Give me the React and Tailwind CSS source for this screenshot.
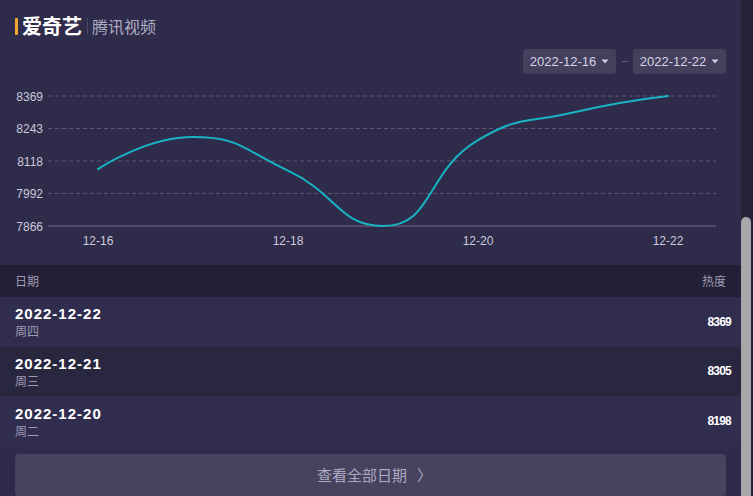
import React from "react";

const cjk = { fontFamily: '"Noto Sans CJK SC", "Liberation Sans", sans-serif' };
const num = { fontFamily: '"Liberation Sans", "Noto Sans CJK SC", sans-serif' };

const points = [
    { label: "12-16", value: 8086 },
    { label: "12-17", value: 8210 },
    { label: "12-18", value: 8080 },
    { label: "12-19", value: 7866 },
    { label: "12-20", value: 8198 },
    { label: "12-21", value: 8305 },
    { label: "12-22", value: 8369 },
];

const rows = [
    { date: "2022-12-22", week: "周四", heat: 8369 },
    { date: "2022-12-21", week: "周三", heat: 8305 },
    { date: "2022-12-20", week: "周二", heat: 8198 },
];

// chart coords are relative to the svg top (page y 74)
const TOP = 22;
const BOTTOM = 152;
const MAX = 8369;
const MIN = 7866;
const toY = (v) => TOP + ((MAX - v) * (BOTTOM - TOP)) / (MAX - MIN);

const clamp = (v, a, b) => Math.max(Math.min(v, Math.max(a, b)), Math.min(a, b));

// same smoothing as an echarts line with smooth: true
function buildPath() {
    const pts = points.map((p, i) => [98 + i * 95, toY(p.value)]);
    const smooth = 0.5;
    const n = pts.length;
    let d = `M${pts[0][0]},${pts[0][1].toFixed(1)}`;
    let cpx0 = pts[0][0];
    let cpy0 = pts[0][1];
    for (let k = 1; k < n; k++) {
        const [x, y] = pts[k];
        let cpx1 = x;
        let cpy1 = y;
        let nx = x;
        let ny = y;
        if (k < n - 1) {
            const [px, py] = pts[k - 1];
            const [qx, qy] = pts[k + 1];
            let vx = qx - px;
            let vy = qy - py;
            const lenPrev = Math.hypot(x - px, y - py);
            const lenNext = Math.hypot(qx - x, qy - y);
            const ratio = lenNext / (lenNext + lenPrev);
            nx = clamp(x + vx * smooth * ratio, qx, x);
            ny = clamp(y + vy * smooth * ratio, qy, y);
            vx = nx - x;
            vy = ny - y;
            cpx1 = clamp(x - (vx * lenPrev) / lenNext, px, x);
            cpy1 = clamp(y - (vy * lenPrev) / lenNext, py, y);
            vx = x - cpx1;
            vy = y - cpy1;
            nx = x + (vx * lenNext) / lenPrev;
            ny = y + (vy * lenNext) / lenPrev;
        }
        d += ` C${cpx0.toFixed(1)},${cpy0.toFixed(1)} ${cpx1.toFixed(1)},${cpy1.toFixed(1)} ${x},${y.toFixed(1)}`;
        cpx0 = nx;
        cpy0 = ny;
    }
    return d;
}

function Caret() {
    return (
        <svg width="8" height="5" viewBox="0 0 8 5" className="ml-[5px]">
            <path d="M0.5 0.5 L7.5 0.5 L4 4.5 Z" fill="#cfcde0" />
        </svg>
    );
}

function DateBox({ value }) {
    return (
        <div className="w-[93px] h-[25px] bg-[#433f5d] rounded-[3px] flex items-center justify-center text-[13px] text-[#d6d4e6]" style={num}>
            <span>{value}</span>
            <Caret />
        </div>
    );
}

function Chart() {
    const ticks = [8369, 8243, 8118, 7992, 7866];
    return (
        <svg width="741" height="192" className="block">
            {ticks.map((t, i) => {
                const y = TOP + i * 32.5;
                return (
                    <g key={t}>
                        <text x="43" y={y + 4.5} textAnchor="end" fontSize="12" fill="#cbc9da" style={num}>{t}</text>
                        {i < 4 ? (
                            <line x1="48" x2="716" y1={y} y2={y} stroke="#5b5874" strokeWidth="1" strokeDasharray="4 3" />
                        ) : (
                            <line x1="48" x2="716" y1={y} y2={y} stroke="#4f4c69" strokeWidth="2" />
                        )}
                    </g>
                );
            })}
            {points.map((p, i) =>
                i % 2 === 0 ? (
                    <text key={p.label} x={98 + i * 95} y="171" textAnchor="middle" fontSize="12" fill="#cbc9da" style={num}>{p.label}</text>
                ) : null
            )}
            <path d={buildPath()} fill="none" stroke="#19b4c4" strokeWidth="2" strokeLinecap="round" />
        </svg>
    );
}

export default function App() {
    return (
        <div className="w-[753px] h-[496px] overflow-hidden flex bg-[#2f2c4b]">
            <div className="w-[741px] shrink-0 flex flex-col">
                {/* Title */}
                <div className="h-[49px] pt-[16px] pl-[15px] flex items-start">
                    <div className="flex items-center h-[20px]">
                        <span className="w-[3px] h-[17px] bg-[#f1a72e] rounded-[1px] mr-[4px]"></span>
                        <span className="text-[20px] leading-[20px] font-bold text-white" style={cjk}>爱奇艺</span>
                        <span className="w-px h-[16px] bg-[#4d4a66] ml-[5px] mr-[4px]"></span>
                        <span className="text-[16px] leading-[20px] text-[#aeabc2]" style={cjk}>腾讯视频</span>
                    </div>
                </div>

                {/* Date range */}
                <div className="h-[25px] flex items-center justify-end pr-[15px]">
                    <DateBox value="2022-12-16" />
                    <span className="w-[6px] h-px bg-[#5f5c78] ml-[6px] mr-[5px]"></span>
                    <DateBox value="2022-12-22" />
                </div>

                <Chart />

                {/* Table */}
                <div className="h-[32px] bg-[#221f36] flex items-center justify-between px-[15px] text-[12px] text-[#9e9bb2]" style={cjk}>
                    <span>日期</span>
                    <span>热度</span>
                </div>
                {rows.map((r, i) => (
                    <div key={r.date} className={`h-[50px] flex items-center justify-between pl-[15px] pr-[10px] ${i === 1 ? "bg-[#29273f]" : "bg-[#302d4e]"}`}>
                        <div className="flex flex-col">
                            <span className="text-[15px] leading-[18px] font-bold text-white tracking-[1px]" style={num}>{r.date}</span>
                            <span className="text-[12px] leading-[15px] text-[#9e9bb2]" style={cjk}>{r.week}</span>
                        </div>
                        <span className="text-[12px] font-bold text-white tracking-[-0.8px]" style={num}>{r.heat}</span>
                    </div>
                ))}

                <div className="pt-[8px] px-[15px]">
                    <div className="h-[42px] rounded-[4px] bg-[#47435f] flex items-center justify-center text-[15px] text-[#aba8bf]" style={cjk}>
                        <span>查看全部日期</span>
                        <span className="ml-[10px] mr-[-8px]">〉</span>
                    </div>
                </div>
            </div>

            {/* Scrollbar */}
            <div className="w-[12px] bg-[#25233a] flex flex-col">
                <div className="h-[217px] shrink-0"></div>
                <div className="w-[10px] flex-1 bg-[#a7a7aa] rounded-t-[5px]"></div>
            </div>
        </div>
    );
}
